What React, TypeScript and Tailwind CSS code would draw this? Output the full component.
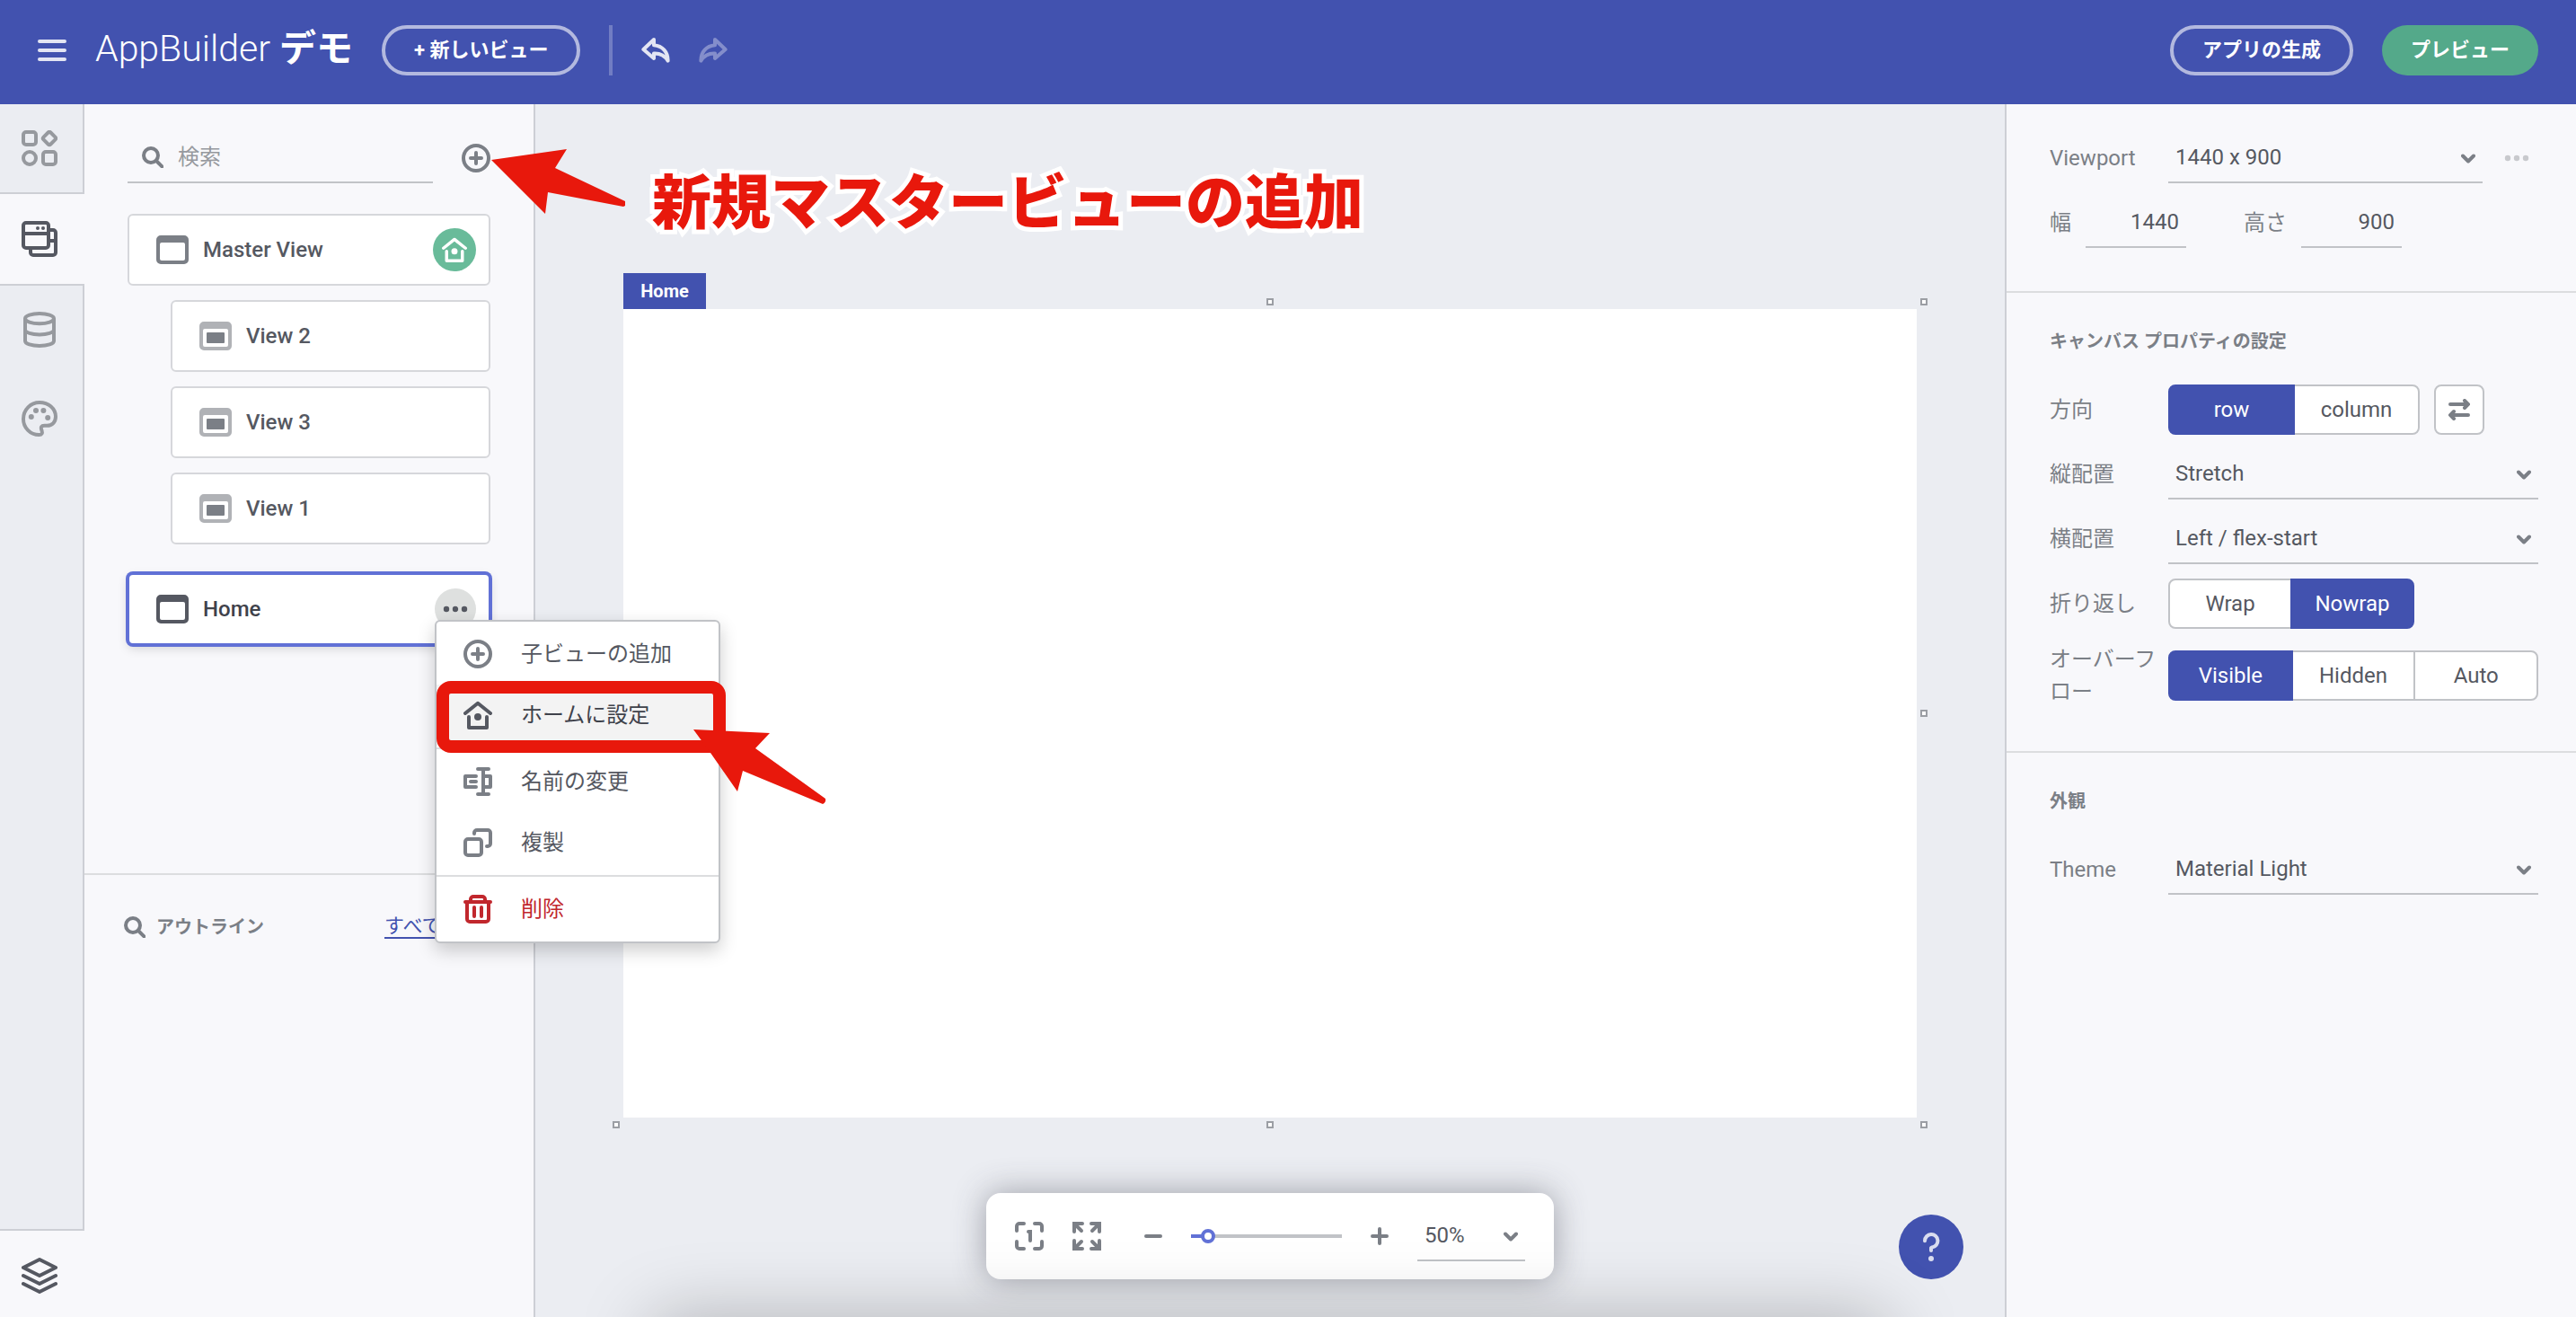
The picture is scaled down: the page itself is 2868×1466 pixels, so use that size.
import React from "react";
import clsx from "clsx";

type IconProps = {
  className?: string;
};

type ToggleProps = {
  label: string;
  options: string[];
  value: string;
  onChange: (value: string) => void;
  className?: string;
};

type SelectFieldProps = {
  id: string;
  options: string[];
  label?: string;
  className?: string;
};

/* Icons are drawn on a half-size grid: 1 unit = 2px */

function MenuIcon() {
  return (
    <svg className="h-8 w-8" viewBox="0 0 16 16" fill="none" stroke="currentColor" strokeWidth="2" strokeLinecap="round">
      <path d="M1 3h14M1 8h14M1 13h14" />
    </svg>
  );
}

function UndoIcon({ className }: IconProps) {
  return (
    <svg className={clsx("h-8 w-8", className)} viewBox="0 0 16 16" fill="none" stroke="currentColor" strokeWidth="2" strokeLinejoin="round">
      <path d="M7 2 1.2 7.5 7 12.5V9.8c3.6-.2 6 1.2 7.8 4C14.9 9 11.8 5.5 7 5.1z" />
    </svg>
  );
}

function ComponentsIcon() {
  return (
    <svg className="h-10 w-10" viewBox="0 0 20 20" fill="none" stroke="currentColor" strokeWidth="2">
      <rect x="1" y="1" width="7" height="7" rx="1.5" />
      <rect x="12" y="12" width="7" height="7" rx="1.5" />
      <circle cx="4.5" cy="15.5" r="3.5" />
      <rect x="12.7" y="1.7" width="5.6" height="5.6" rx="1" transform="rotate(45 15.5 4.5)" />
    </svg>
  );
}

function ViewsIcon() {
  return (
    <svg className="h-10 w-10" viewBox="0 0 20 20" fill="none" stroke="currentColor" strokeWidth="2">
      <rect x="1" y="1" width="14" height="14" rx="1.5" />
      <path d="M1 7h14M15 5h2.5A1.5 1.5 0 0 1 19 6.5v11a1.5 1.5 0 0 1-1.5 1.5h-11A1.5 1.5 0 0 1 5 17.5V15M15 11h4" />
      <circle cx="9" cy="4" r="1" fill="currentColor" stroke="none" />
      <circle cx="12" cy="4" r="1" fill="currentColor" stroke="none" />
    </svg>
  );
}

function DataIcon() {
  return (
    <svg className="h-10 w-10" viewBox="0 0 20 20" fill="none" stroke="currentColor" strokeWidth="2">
      <ellipse cx="10" cy="3.8" rx="8" ry="2.8" />
      <path d="M2 3.8v12.4C2 17.8 5.6 19 10 19s8-1.2 8-2.8V3.8M2 10c0 1.5 3.6 2.7 8 2.7s8-1.2 8-2.7" />
    </svg>
  );
}

function PaletteIcon() {
  return (
    <svg className="h-10 w-10" viewBox="0 0 20 20" fill="none" stroke="currentColor" strokeWidth="2" strokeLinejoin="round">
      <path d="M10 1C5 1 1 5 1 10.2 1 15 4.800 19 9.800 19c1.5 0 1.9-1 1.5-2.2-.9-2.3-.2-2.9 1.4-2.900h1.500c2.8 0 4.8-2 4.800-5C19 4.500 15 1 10 1z" />
      <g fill="currentColor" stroke="none">
        <circle cx="5.4" cy="9" r="1.5" />
        <circle cx="8" cy="5.5" r="1.5" />
        <circle cx="12.2" cy="5.5" r="1.5" />
        <circle cx="14.6" cy="9.5" r="1.5" />
      </g>
    </svg>
  );
}

function LayersIcon() {
  return (
    <svg className="h-10 w-10" viewBox="0 0 20 20" fill="none" stroke="currentColor" strokeWidth="2" strokeLinecap="round" strokeLinejoin="round">
      <path d="M10 1l9 4.500-9 4.500-9-4.500zM1 10l9 4.500L19 10M1 14.500L10 19l9-4.500" />
    </svg>
  );
}

function SearchIcon() {
  return (
    <svg className="h-6 w-6 shrink-0" viewBox="0 0 12 12" fill="none" stroke="currentColor" strokeWidth="2" strokeLinecap="round">
      <circle cx="5" cy="5" r="4" />
      <path d="M8 8l3.2 3.2" />
    </svg>
  );
}

function AddIcon() {
  return (
    <svg className="h-8 w-8" viewBox="0 0 16 16" fill="none" stroke="currentColor" strokeWidth="2" strokeLinecap="round">
      <circle cx="8" cy="8" r="7" />
      <path d="M8 5v6M5 8h6" />
    </svg>
  );
}

function HomeIcon({ className }: IconProps) {
  return (
    <svg className={className} viewBox="0 0 16 16" fill="none" stroke="currentColor" strokeWidth="2" strokeLinecap="round" strokeLinejoin="round">
      <path d="M1 7l7-5.600L15 7M3 9v6h10V9" />
      <circle cx="8" cy="9" r="2" fill="currentColor" stroke="none" />
    </svg>
  );
}

function RenameIcon() {
  return (
    <svg className="h-8 w-8" viewBox="0 0 16 16" fill="none" stroke="currentColor" strokeWidth="2" strokeLinecap="round" strokeLinejoin="round">
      <path d="M7 5H1v6h6M4 8h3M8 1h6M8 15h6M11 1v14M11 5h4v6h-4" />
    </svg>
  );
}

function DuplicateIcon() {
  return (
    <svg className="h-8 w-8" viewBox="0 0 16 16" fill="none" stroke="currentColor" strokeWidth="2" strokeLinecap="round">
      <rect x="1" y="6" width="9" height="9" rx="1.5" />
      <path d="M6 3V2.500A1.500 1.500 0 0 1 7.500 1h6A1.500 1.500 0 0 1 15 2.500v6a1.500 1.500 0 0 1-1.500 1.500H13" />
    </svg>
  );
}

function TrashIcon() {
  return (
    <svg className="h-8 w-8" viewBox="0 0 16 16" fill="none" stroke="currentColor" strokeWidth="2" strokeLinecap="round">
      <path d="M1 4h14M4 4V2.500A1.500 1.500 0 0 1 5.500 1h5A1.500 1.500 0 0 1 12 2.500V4M2 4v9.500A1.500 1.500 0 0 0 3.500 15h9a1.500 1.500 0 0 0 1.500-1.500V4M6 7v5M10 7v5" />
    </svg>
  );
}

function ViewIcon({ child, className }: IconProps & { child?: boolean }) {
  return (
    <svg className={clsx("h-8 w-9", className)} viewBox="0 0 18 16" fill="currentColor">
      <path
        fillRule="evenodd"
        d="M2.500 0h13A2.500 2.500 0 0 1 18 2.500v11a2.500 2.500 0 0 1-2.500 2.500h-13A2.500 2.500 0 0 1 0 13.500v-11A2.500 2.500 0 0 1 2.500 0zM3 4a1 1 0 0 0-1 1v8a1 1 0 0 0 1 1h12a1 1 0 0 0 1-1V5a1 1 0 0 0-1-1z"
      />
      {child && <rect x="4" y="6" width="10" height="6" rx="0.5" fill="#7b7f86" />}
    </svg>
  );
}

function DotsIcon({ className }: IconProps) {
  return (
    <svg className={className} viewBox="0 0 28 8" fill="currentColor">
      <circle cx="4" cy="4" r="3.2" />
      <circle cx="14" cy="4" r="3.2" />
      <circle cx="24" cy="4" r="3.2" />
    </svg>
  );
}

function ChevronIcon() {
  return (
    <svg
      className="pointer-events-none absolute right-2 h-4 w-4 text-[#7b7f86]"
      viewBox="0 0 16 16"
      fill="none"
      stroke="currentColor"
      strokeWidth="4"
      strokeLinecap="round"
      strokeLinejoin="round"
    >
      <path d="M2 6.500l6 6 6-6" />
    </svg>
  );
}

function SwapIcon() {
  return (
    <svg className="h-6 w-6" viewBox="0 0 12 12" fill="none" stroke="currentColor" strokeWidth="2" strokeLinecap="round">
      <path d="M1 3h9M9 1l2 2-2 2M11 9H2M3 7L1 9l2 2" />
    </svg>
  );
}

function ActualSizeIcon() {
  return (
    <svg className="h-8 w-8" viewBox="0 0 16 16" fill="none" stroke="currentColor" strokeWidth="2" strokeLinecap="round">
      <path d="M5 1H2.500A1.500 1.500 0 0 0 1 2.500V5M11 1h2.500A1.500 1.500 0 0 1 15 2.500V5M5 15H2.500A1.500 1.500 0 0 1 1 13.500V11M11 15h2.500a1.500 1.500 0 0 0 1.500-1.500V11M7.500 5.500h1V10.500" />
    </svg>
  );
}

function FitIcon() {
  return (
    <svg className="h-8 w-8" viewBox="0 0 16 16" fill="none" stroke="currentColor" strokeWidth="2" strokeLinecap="round">
      <path d="M5.500 1H1v4.500M1.500 1.500L5 5M10.500 1H15v4.500M14.500 1.500L11 5M5.500 15H1v-4.500M1.500 14.500L5 11M10.500 15H15v-4.500M14.500 14.500L11 11" />
    </svg>
  );
}

function SelectField({ id, options, label, className }: SelectFieldProps) {
  return (
    <div className={clsx("relative flex h-14 items-center border-b-2 border-[#c1c3c7]", className)}>
      <select
        id={id}
        aria-label={label}
        className="h-full w-full appearance-none bg-transparent pr-8 pl-2 text-[#555861] outline-none"
      >
        {options.map((option) => (
          <option key={option}>{option}</option>
        ))}
      </select>
      <ChevronIcon />
    </div>
  );
}

function ToggleGroup({ label, options, value, onChange, className }: ToggleProps) {
  return (
    <div role="group" aria-label={label} className={clsx("flex h-14", className)}>
      {options.map((option) => (
        <button
          key={option}
          onClick={() => onChange(option)}
          className={clsx(
            "-ml-0.5 flex-1 border-2 first:ml-0 first:rounded-l-lg last:rounded-r-lg",
            option === value
              ? "z-10 border-[#4252af] bg-[#4252af] text-white"
              : "border-[#c1c3c7] bg-white text-[#555861]",
          )}
        >
          {option}
        </button>
      ))}
    </div>
  );
}

function Header() {
  return (
    <header className="flex h-29 items-center bg-[#4252af] px-[42px] pb-1 text-white">
      <button aria-label="メニュー" className="text-white/85">
        <MenuIcon />
      </button>
      <h1 className="ml-8 pb-1 text-[41px] leading-none font-light">
        AppBuilder <span className="font-semibold">デモ</span>
      </h1>
      <button className="ml-8 h-14 rounded-full border-4 border-white/60 px-8 text-[22px] font-bold">
        + 新しいビュー
      </button>
      <div className="mx-8 h-14 w-1 bg-white/25" />
      <button aria-label="元に戻す" className="text-white/85">
        <UndoIcon />
      </button>
      <button aria-label="やり直し" className="ml-8 text-white/35">
        <UndoIcon className="-scale-x-100" />
      </button>
      <button className="ml-auto h-14 rounded-full border-4 border-white/60 px-8 text-[22px] font-bold">
        アプリの生成
      </button>
      <button className="ml-8 h-14 rounded-full bg-[#54a98a] px-8 text-[22px] font-bold">プレビュー</button>
    </header>
  );
}

const railTabs = [
  { name: "コンポーネント", Icon: ComponentsIcon },
  { name: "ビュー", Icon: ViewsIcon },
  { name: "データ", Icon: DataIcon },
  { name: "テーマ", Icon: PaletteIcon },
];

function Rail() {
  const [active, setActive] = React.useState("ビュー");

  return (
    <nav className="flex w-[94px] shrink-0 flex-col text-[#96999e]">
      {railTabs.map(({ name, Icon }, index) => (
        <button
          key={name}
          aria-label={name}
          onClick={() => setActive(name)}
          className={clsx(
            "flex h-[100px] items-center border-[#cdcfd5] pl-6",
            name === active ? "bg-[#f8f8fb] text-[#555861]" : "border-r-2 bg-[#ebedf2]",
            index === 0 && "border-b-2",
            index === 2 && "border-t-2",
          )}
        >
          <Icon />
        </button>
      ))}
      <div className="flex-1 border-r-2 border-b-2 border-[#cdcfd5] bg-[#ebedf2]" />
      <button aria-label="アウトライン" className="flex h-24 items-center pt-1 pl-6 text-[#555861]">
        <LayersIcon />
      </button>
    </nav>
  );
}

const menuRow = "flex h-[68px] w-full items-center gap-8 pl-[30px]";

function ContextMenu() {
  return (
    <div className="absolute top-[50px] left-[340px] z-20 w-[318px] rounded-md border-2 border-[#c1c3c7] bg-white text-[#555861] shadow-[0_8px_20px_rgba(0,0,0,0.2)]">
      <div className="border-b-2 border-[#dcdddf] py-0.5">
        <button className={menuRow}>
          <span className="text-[#7b7f86]">
            <AddIcon />
          </span>
          子ビューの追加
        </button>
        <div className="relative">
          <button className={clsx(menuRow, "bg-[#f3f3f3] text-[#3f424b]")}>
            <HomeIcon className="h-8 w-8 text-[#555861]" />
            ホームに設定
          </button>
          {/* highlight around the menu entry */}
          <div className="absolute -top-1 -right-2 -bottom-2 left-0 rounded-2xl border-[14px] border-[#e8180c]" />
          <svg className="absolute top-12 left-[286px] h-[86px] w-[150px]" viewBox="0 0 150 86" fill="#e8180c">
            <path d="M0 2L85 6 69 23 147 79Q148 83 144 85L55 48 49 71 19 28z" />
          </svg>
        </div>
      </div>
      <div className="border-b-2 border-[#dcdddf] py-0.5">
        <button className={menuRow}>
          <span className="text-[#7b7f86]">
            <RenameIcon />
          </span>
          名前の変更
        </button>
        <button className={menuRow}>
          <span className="text-[#7b7f86]">
            <DuplicateIcon />
          </span>
          複製
        </button>
      </div>
      <div className="py-0.5">
        <button className={clsx(menuRow, "text-[#c1272d]")}>
          <TrashIcon />
          削除
        </button>
      </div>
    </div>
  );
}

function ViewsPanel() {
  return (
    <aside className="relative flex w-[502px] shrink-0 flex-col border-r-2 border-[#cdcfd5] bg-[#f8f8fb]">
      <div className="h-[858px] border-b-2 border-[#dcdddf] px-12 pt-8">
        <div className="flex items-center justify-between text-[#7b7f86]">
          <label className="flex h-14 w-[340px] items-center gap-4 border-b-2 border-[#c1c3c7] pl-4">
            <SearchIcon />
            <input
              type="search"
              placeholder="検索"
              className="w-full bg-transparent outline-none placeholder:text-[#96999e]"
            />
          </label>
          <button aria-label="新規マスタービューの追加">
            <AddIcon />
          </button>
        </div>

        <div className="mt-[34px] flex flex-col gap-4 font-medium text-[#555861]">
          <div className="flex h-20 items-center gap-4 rounded-md border-2 border-[#d6d7db] bg-white pr-3.5 pl-[30px]">
            <ViewIcon className="text-[#7b7f86]" />
            Master View
            <span className="ml-auto flex h-12 w-12 items-center justify-center rounded-full bg-[#69bb9a] text-white">
              <HomeIcon className="h-7 w-7" />
            </span>
          </div>
          {["View 2", "View 3", "View 1"].map((view) => (
            <div
              key={view}
              className="ml-12 flex h-20 items-center gap-4 rounded-md border-2 border-[#d6d7db] bg-white pl-[30px]"
            >
              <ViewIcon child className="text-[#b0b2b6]" />
              {view}
            </div>
          ))}
        </div>

        <div className="relative mt-8 flex h-20 items-center gap-4 rounded-md border-2 border-[#6171d6] bg-white pr-3.5 pl-[30px] font-medium text-[#3f424b] ring-2 shadow-[0_4px_12px_rgba(0,0,0,0.15)] ring-[#6171d6]">
          <ViewIcon className="text-[#555861]" />
          Home
          <button
            aria-label="その他"
            className="ml-auto flex h-[46px] w-[46px] items-center justify-center rounded-full bg-[#dee0df] text-[#555861]"
          >
            <DotsIcon className="w-7" />
          </button>
          <div className="absolute inset-0 font-normal">
            <ContextMenu />
          </div>
        </div>
      </div>

      <div className="flex h-[116px] items-center gap-3 pr-12 pl-11 text-[#7b7f86]">
        <SearchIcon />
        <h2 className="text-xl font-bold">アウトライン</h2>
        <a href="#" className="ml-auto w-[118px] border-b-2 border-[#4252af] text-[22px] leading-6 text-[#4252af]">
          すべて
        </a>
      </div>

      {/* callout pointing at the add button */}
      <svg className="absolute top-[50px] left-[453px] z-20 h-[74px] w-[150px]" viewBox="0 0 150 74" fill="#e8180c">
        <path d="M0 12L84 0 71 21 149 58V63L147 64 63 48 60 72z" />
      </svg>
    </aside>
  );
}

const handles = [
  "-top-3 left-1/2 -ml-1",
  "-top-3 -right-3",
  "top-1/2 -right-3 -mt-1",
  "-bottom-3 -left-3",
  "-bottom-3 left-1/2 -ml-1",
  "-bottom-3 -right-3",
];

function Workspace() {
  return (
    <main className="relative flex flex-1 flex-col items-center overflow-hidden bg-[#ebedf2] pt-[188px]">
      <div className="relative">
        <p className="absolute bottom-full left-8 mb-11 text-[66px] leading-none font-black whitespace-nowrap text-[#e8180c] [-webkit-text-stroke:10px_white] [paint-order:stroke_fill]">
          新規マスタービューの追加
        </p>
        <div className="flex h-10 w-[92px] items-center justify-center bg-[#4252af] text-xl font-bold text-white">
          Home
        </div>
        <div className="relative h-[900px] w-[1440px] bg-white">
          {handles.map((position) => (
            <span key={position} className={clsx("absolute h-2 w-2 border-2 border-[#9b9ea4] bg-white", position)} />
          ))}
        </div>
      </div>

      <div className="absolute bottom-[42px] flex h-24 items-center rounded-2xl bg-white px-8 text-[#7b7f86] shadow-[0_0_36px_rgba(60,62,75,0.45)]">
        <button aria-label="実寸表示">
          <ActualSizeIcon />
        </button>
        <button aria-label="全体表示" className="ml-8">
          <FitIcon />
        </button>
        <button aria-label="縮小" className="ml-[42px]">
          <svg className="h-8 w-8" viewBox="0 0 16 16" stroke="currentColor" strokeWidth="2" strokeLinecap="round">
            <path d="M4 8h8" />
          </svg>
        </button>
        <input
          type="range"
          aria-label="ズーム"
          min={0}
          max={100}
          defaultValue={7}
          className="mx-[26px] h-1 w-[168px] appearance-none bg-linear-to-r from-[#6171d6] from-10% to-[#c1c3c7] to-10% [&::-webkit-slider-thumb]:h-4 [&::-webkit-slider-thumb]:w-4 [&::-webkit-slider-thumb]:appearance-none [&::-webkit-slider-thumb]:rounded-full [&::-webkit-slider-thumb]:border-4 [&::-webkit-slider-thumb]:border-solid [&::-webkit-slider-thumb]:border-[#6171d6] [&::-webkit-slider-thumb]:bg-white"
        />
        <button aria-label="拡大">
          <svg className="h-8 w-8" viewBox="0 0 16 16" stroke="currentColor" strokeWidth="2" strokeLinecap="round">
            <path d="M4 8h8M8 4v8" />
          </svg>
        </button>
        <SelectField id="zoom" label="ズーム倍率" options={["50%", "75%", "100%"]} className="ml-[26px] w-[120px]" />
      </div>

      <button
        aria-label="ヘルプ"
        className="absolute right-[46px] bottom-[42px] flex h-18 w-18 items-center justify-center rounded-full bg-[#4252af] text-white/80"
      >
        <svg className="h-8 w-8" viewBox="0 0 16 16" fill="none" stroke="currentColor" strokeWidth="2" strokeLinecap="round" strokeLinejoin="round">
          <path d="M4.500 4.600A3.600 3.600 0 1 1 8.600 8.200L8 8.500V10" />
          <circle cx="8" cy="14.5" r="1.5" fill="currentColor" stroke="none" />
        </svg>
      </button>

      {/* soft shade rising from the bottom edge */}
      <div className="pointer-events-none absolute inset-x-32 top-full h-20 rounded-3xl shadow-[0_0_80px_rgba(0,0,0,0.25)]" />
    </main>
  );
}

const rowLabel = "w-[132px] shrink-0 text-[#7b7f86]";

function PropertiesPanel() {
  const [direction, setDirection] = React.useState("row");
  const [wrap, setWrap] = React.useState("Nowrap");
  const [overflow, setOverflow] = React.useState("Visible");

  return (
    <aside className="w-[636px] shrink-0 border-l-2 border-[#cdcfd5] bg-[#f8f8fb] text-[#555861]">
      <section className="border-b-2 border-[#dcdddf] pt-6 pr-[42px] pb-10 pl-12">
        <div className="flex h-18 items-center">
          <label htmlFor="viewport" className={rowLabel}>
            Viewport
          </label>
          <SelectField id="viewport" options={["1440 x 900", "1920 x 1080"]} className="flex-1" />
          <button aria-label="その他" className="ml-6 w-[38px] text-[#c8c9cd]">
            <DotsIcon className="w-7" />
          </button>
        </div>
        <div className="flex h-18 items-center">
          <label htmlFor="width" className="w-10 text-[#7b7f86]">
            幅
          </label>
          <input
            id="width"
            defaultValue="1440"
            className="h-14 w-28 border-b-2 border-[#c1c3c7] bg-transparent px-2 text-right outline-none"
          />
          <label htmlFor="height" className="ml-16 w-16 text-[#7b7f86]">
            高さ
          </label>
          <input
            id="height"
            defaultValue="900"
            className="h-14 w-28 border-b-2 border-[#c1c3c7] bg-transparent px-2 text-right outline-none"
          />
        </div>
      </section>

      <section className="border-b-2 border-[#dcdddf] pt-9 pr-[42px] pb-12 pl-12">
        <h2 className="mb-[22px] text-xl leading-9 font-bold text-[#7b7f86]">キャンバス プロパティの設定</h2>
        <div className="flex h-18 items-center">
          <span className={rowLabel}>方向</span>
          <ToggleGroup
            label="方向"
            options={["row", "column"]}
            value={direction}
            onChange={setDirection}
            className="w-[280px]"
          />
          <button
            aria-label="反転"
            className="ml-4 flex h-14 w-14 items-center justify-center rounded-lg border-2 border-[#c1c3c7] bg-white text-[#7b7f86]"
          >
            <SwapIcon />
          </button>
        </div>
        <div className="flex h-18 items-center">
          <label htmlFor="vertical" className={rowLabel}>
            縦配置
          </label>
          <SelectField id="vertical" options={["Stretch", "Center"]} className="flex-1" />
        </div>
        <div className="flex h-18 items-center">
          <label htmlFor="horizontal" className={rowLabel}>
            横配置
          </label>
          <SelectField id="horizontal" options={["Left / flex-start", "Center"]} className="flex-1" />
        </div>
        <div className="flex h-18 items-center">
          <span className={rowLabel}>折り返し</span>
          <ToggleGroup
            label="折り返し"
            options={["Wrap", "Nowrap"]}
            value={wrap}
            onChange={setWrap}
            className="w-[274px]"
          />
        </div>
        <div className="mt-2 flex h-18 items-center">
          <span className={clsx(rowLabel, "pr-3")}>オーバーフロー</span>
          <ToggleGroup
            label="オーバーフロー"
            options={["Visible", "Hidden", "Auto"]}
            value={overflow}
            onChange={setOverflow}
            className="flex-1"
          />
        </div>
      </section>

      <section className="pt-9 pr-[42px] pl-12">
        <h2 className="mb-[22px] text-xl leading-9 font-bold text-[#7b7f86]">外観</h2>
        <div className="flex h-18 items-center">
          <label htmlFor="theme" className={rowLabel}>
            Theme
          </label>
          <SelectField id="theme" options={["Material Light", "Material Dark"]} className="flex-1" />
        </div>
      </section>
    </aside>
  );
}

export default function App() {
  return (
    <div className="flex min-h-screen flex-col bg-[#f8f8fb] font-['Roboto','Noto_Sans_CJK_JP',sans-serif] text-2xl leading-9">
      <Header />
      <div className="flex flex-1">
        <Rail />
        <ViewsPanel />
        <Workspace />
        <PropertiesPanel />
      </div>
    </div>
  );
}
